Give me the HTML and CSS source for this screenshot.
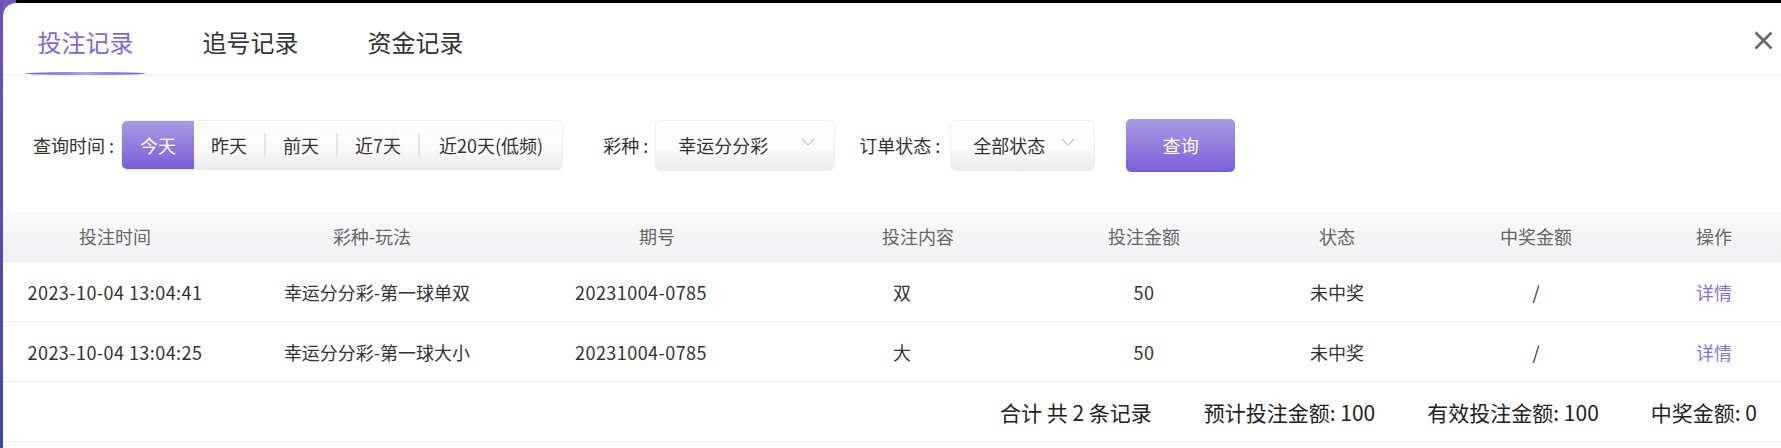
FILE: index.html
```html
<!DOCTYPE html>
<html lang="zh-CN">
<head>
<meta charset="utf-8">
<title>投注记录</title>
<link rel="stylesheet" href="styles.css">
</head>
<body>
<div class="frame">
  <div class="panel">
    <div class="tabbar">
      <div class="tab active"><span class="tab-text">投注记录</span><span class="tab-line"></span></div>
      <div class="tab"><span class="tab-text">追号记录</span><span class="tab-line"></span></div>
      <div class="tab"><span class="tab-text">资金记录</span><span class="tab-line"></span></div>
      <div class="close">
        <svg width="19" height="19" viewBox="0 0 19 19"><path d="M1.5 1.5 L17.5 17.5 M17.5 1.5 L1.5 17.5" stroke="#6b6b6b" stroke-width="2.7" fill="none"/></svg>
      </div>
    </div>

    <div class="filters">
      <span class="label">查询时间 :</span>
      <div class="segmented">
        <span class="seg active">今天</span>
        <span class="seg">昨天</span>
        <span class="divider"></span>
        <span class="seg">前天</span>
        <span class="divider"></span>
        <span class="seg">近7天</span>
        <span class="divider"></span>
        <span class="seg seg-last">近20天(低频)</span>
      </div>
      <span class="label label-lottery">彩种 :</span>
      <div class="select sel-lottery">
        <span>幸运分分彩</span>
        <svg class="chev" width="14" height="8" viewBox="0 0 14 8"><polyline points="1,1 7,7 13,1" fill="none" stroke="#c3c5cc" stroke-width="1.1"/></svg>
      </div>
      <span class="label label-status">订单状态 :</span>
      <div class="select sel-status">
        <span>全部状态</span>
        <svg class="chev" width="14" height="8" viewBox="0 0 14 8"><polyline points="1,1 7,7 13,1" fill="none" stroke="#c3c5cc" stroke-width="1.1"/></svg>
      </div>
      <button class="btn-query">查询</button>
    </div>

    <div class="table">
      <div class="thead">
        <div>投注时间</div>
        <div>彩种-玩法</div>
        <div>期号</div>
        <div>投注内容</div>
        <div>投注金额</div>
        <div>状态</div>
        <div>中奖金额</div>
        <div>操作</div>
      </div>
      <div class="trow">
        <div class="num">2023-10-04 13:04:41</div>
        <div class="c2">幸运分分彩-第一球单双</div>
        <div class="c3 num">20231004-0785</div>
        <div class="c4">双</div>
        <div class="num">50</div>
        <div>未中奖</div>
        <div>/</div>
        <div class="link">详情</div>
      </div>
      <div class="trow">
        <div class="num">2023-10-04 13:04:25</div>
        <div class="c2">幸运分分彩-第一球大小</div>
        <div class="c3 num">20231004-0785</div>
        <div class="c4">大</div>
        <div class="num">50</div>
        <div>未中奖</div>
        <div>/</div>
        <div class="link">详情</div>
      </div>
      <div class="tfoot">
        <span>合计 共 2 条记录</span>
        <span>预计投注金额: 100</span>
        <span>有效投注金额: 100</span>
        <span>中奖金额: 0</span>
      </div>
    </div>
  </div>
</div>
</body>
</html>
```

FILE: styles.css
```css
* { box-sizing: border-box; }
html, body { margin: 0; padding: 0; }
body {
  background: #000;
  font-family: "Noto Sans CJK SC", "Microsoft YaHei", sans-serif;
  color: #333;
  font-size: 18px;
}
.frame {
  height: 448px;
  padding: 3px 0 0 3px;
  background:
    linear-gradient(#6c52b8, #3f4a9c) 0 0 / 3px 100% no-repeat,
    linear-gradient(#7257c0, #7257c0) 0 0 / 16px 16px no-repeat,
    #000;
  overflow: hidden;
}
.panel {
  background: #fff;
  height: 445px;
  border-top-left-radius: 13px;
  overflow: hidden;
}

/* tabs */
.tabbar {
  display: flex;
  align-items: stretch;
  height: 73px;
  padding-left: 22px;
  border-bottom: 1px solid #efeff2;
}
.tab {
  display: flex;
  flex-direction: column;
  justify-content: flex-end;
  align-items: center;
  width: 121px;
  margin-right: 44px;
}
.tab-text {
  font-size: 24px;
  line-height: 30px;
  color: #333;
  margin-bottom: 15px;
}
.tab-line {
  width: 121px;
  height: 3px;
  border-radius: 50%;
}
.tab.active .tab-text { color: #8466d8; }
.tab.active .tab-line {
  background: linear-gradient(90deg, #7053d4 0%, #b79ff3 50%, #7053d4 100%);
}
.close {
  margin-left: auto;
  padding-right: 8px;
  padding-top: 3px;
  display: flex;
  align-items: center;
}

/* filters */
.filters {
  display: flex;
  align-items: center;
  height: 52px;
  margin-top: 43px;
  padding-left: 30px;
}
.label {
  color: #333;
  white-space: nowrap;
  margin-right: 7px;
}
.label-lottery { margin-left: 40px; }
.label-status { margin-left: 24px; margin-right: 10px; }
.segmented {
  display: flex;
  align-items: center;
  height: 50px;
  border: 1px solid #eeeef0;
  border-radius: 6px;
  overflow: hidden;
  background: linear-gradient(#ffffff 0%, #fbfbfb 55%, #ebebeb 100%);
  box-shadow: 0 1px 2px rgba(0,0,0,0.04);
}
.seg {
  padding: 0 17px;
  height: 100%;
  display: flex;
  align-items: center;
  color: #333;
  white-space: nowrap;
}
.seg-last { padding: 0 19px 0 19px; }
.seg.active {
  background: linear-gradient(#aa9be3, #7b5ed7);
  color: #fff;
  padding: 0 18px;
}
.divider {
  width: 2px;
  height: 24px;
  background: #e6e6e6;
}
.select {
  display: flex;
  align-items: center;
  justify-content: space-between;
  height: 51px;
  padding: 0 19px 0 22px;
  border: 1px solid #eeeef0;
  border-radius: 6px;
  background: linear-gradient(#ffffff 0%, #fbfbfb 55%, #ebebeb 100%);
  color: #333;
}
.sel-lottery { width: 180px; }
.sel-status { width: 145px; }
.chev { margin-bottom: 6px; }
.btn-query {
  margin-left: 31px;
  width: 109px;
  height: 53px;
  border: none;
  border-radius: 5px;
  background: linear-gradient(#aa9be3, #7b5ed7);
  color: #fff;
  font-family: inherit;
  font-size: 18px;
}

/* table */
.table { margin-top: 40px; }
.thead, .trow {
  display: grid;
  grid-template-columns: 224px 290px 280px 242px 210px 176px 222px 1fr;
  align-items: center;
  text-align: center;
}
.thead {
  height: 51px;
  background: linear-gradient(#fafafa, #f1f1f3);
  border-bottom: 1px solid #eaeaef;
  color: #666;
}
.trow {
  height: 60px;
  border-bottom: 1px solid #eeeef2;
  color: #333;
}
.num { letter-spacing: 0.45px; }
.trow .c2 { padding-left: 10px; }
.trow .c3, .trow .c4 { padding-right: 32px; }
.link { color: #8a6fdc; }
.tfoot {
  display: flex;
  justify-content: flex-end;
  align-items: center;
  gap: 52px;
  height: 60px;
  padding-right: 24px;
  border-bottom: 1px solid #eeeef2;
  color: #222;
  font-size: 21px;
}
```
